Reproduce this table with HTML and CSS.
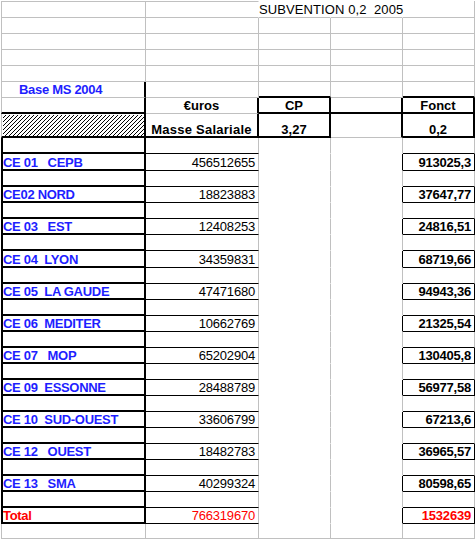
FILE: index.html
```html
<!DOCTYPE html>
<html lang="fr">
<head>
<meta charset="utf-8">
<title>Subvention 0,2 2005</title>
<link rel="stylesheet" href="styles.css">
</head>
<body>
<div class="sheet">
  <!-- row 1 -->
  <div class="c a top"></div>
  <div class="c top nr"></div>
  <div class="c nr"><span class="sub">SUBVENTION 0,2  2005</span></div>
  <div class="c nr"></div>
  <div class="c"></div>
  <!-- rows 2-5 -->
  <div class="c a"></div><div class="c"></div><div class="c"></div><div class="c"></div><div class="c"></div>
  <div class="c a"></div><div class="c"></div><div class="c"></div><div class="c"></div><div class="c"></div>
  <div class="c a"></div><div class="c"></div><div class="c"></div><div class="c"></div><div class="c"></div>
  <div class="c a"></div><div class="c"></div><div class="c"></div><div class="c"></div><div class="c"></div>
  <!-- row 6 -->
  <div class="c a tr base"><span class="lbl">Base MS 2004</span></div>
  <div class="c"></div>
  <div class="c tb"></div>
  <div class="c"></div>
  <div class="c tb"></div>
  <!-- row 7 -->
  <div class="c a tr tb"></div>
  <div class="c tr ctr"><span class="hd">€uros</span></div>
  <div class="c tr tb ctr"><span class="hd">CP</span></div>
  <div class="c tr tb"></div>
  <div class="c tr tb ctr"><span class="hd">Fonct</span></div>
  <!-- row 8 -->
  <div class="c a tr tb hatch"></div>
  <div class="c tr tb ctr"><span class="hd wide">Masse Salariale</span></div>
  <div class="c tr tb ctr"><span class="hd">3,27</span></div>
  <div class="c tr"></div>
  <div class="c tr tb ctr"><span class="hd">0,2</span></div>
  <!-- row 9 spacer -->
  <div class="c a tl tr tb"></div><div class="c kb"></div><div class="c nb"></div><div class="c nb"></div><div class="c kb"></div>
  <!-- CE 01 -->
  <div class="c a tl tr tb"><span class="lbl">CE 01   CEPB</span></div>
  <div class="c kb rgt"><span class="num">456512655</span></div>
  <div class="c nb"></div>
  <div class="c nb kr"></div>
  <div class="c kb kr rgt"><span class="bn">913025,3</span></div>
  <div class="c a tl tr tb"></div><div class="c kb"></div><div class="c nb"></div><div class="c nb"></div><div class="c kb"></div>
  <!-- CE02 -->
  <div class="c a tl tr tb"><span class="lbl">CE02 NORD</span></div>
  <div class="c kb rgt"><span class="num">18823883</span></div>
  <div class="c nb"></div>
  <div class="c nb kr"></div>
  <div class="c kb kr rgt"><span class="bn">37647,77</span></div>
  <div class="c a tl tr tb"></div><div class="c kb"></div><div class="c nb"></div><div class="c nb"></div><div class="c kb"></div>
  <!-- CE 03 -->
  <div class="c a tl tr tb"><span class="lbl">CE 03   EST</span></div>
  <div class="c kb rgt"><span class="num">12408253</span></div>
  <div class="c nb"></div>
  <div class="c nb kr"></div>
  <div class="c kb kr rgt"><span class="bn">24816,51</span></div>
  <div class="c a tl tr tb"></div><div class="c kb"></div><div class="c nb"></div><div class="c nb"></div><div class="c kb"></div>
  <!-- CE 04 -->
  <div class="c a tl tr tb"><span class="lbl">CE 04  LYON</span></div>
  <div class="c kb rgt"><span class="num">34359831</span></div>
  <div class="c nb"></div>
  <div class="c nb kr"></div>
  <div class="c kb kr rgt"><span class="bn">68719,66</span></div>
  <div class="c a tl tr tb"></div><div class="c kb"></div><div class="c nb"></div><div class="c nb"></div><div class="c kb"></div>
  <!-- CE 05 -->
  <div class="c a tl tr tb"><span class="lbl">CE 05  LA GAUDE</span></div>
  <div class="c kb rgt"><span class="num">47471680</span></div>
  <div class="c nb"></div>
  <div class="c nb kr"></div>
  <div class="c kb kr rgt"><span class="bn">94943,36</span></div>
  <div class="c a tl tr tb"></div><div class="c kb"></div><div class="c nb"></div><div class="c nb"></div><div class="c kb"></div>
  <!-- CE 06 -->
  <div class="c a tl tr tb"><span class="lbl">CE 06  MEDITER</span></div>
  <div class="c kb rgt"><span class="num">10662769</span></div>
  <div class="c nb"></div>
  <div class="c nb kr"></div>
  <div class="c kb kr rgt"><span class="bn">21325,54</span></div>
  <div class="c a tl tr tb"></div><div class="c kb"></div><div class="c nb"></div><div class="c nb"></div><div class="c kb"></div>
  <!-- CE 07 -->
  <div class="c a tl tr tb"><span class="lbl">CE 07   MOP</span></div>
  <div class="c kb rgt"><span class="num">65202904</span></div>
  <div class="c nb"></div>
  <div class="c nb kr"></div>
  <div class="c kb kr rgt"><span class="bn">130405,8</span></div>
  <div class="c a tl tr tb"></div><div class="c kb"></div><div class="c nb"></div><div class="c nb"></div><div class="c kb"></div>
  <!-- CE 09 -->
  <div class="c a tl tr tb"><span class="lbl">CE 09  ESSONNE</span></div>
  <div class="c kb rgt"><span class="num">28488789</span></div>
  <div class="c nb"></div>
  <div class="c nb kr"></div>
  <div class="c kb kr rgt"><span class="bn">56977,58</span></div>
  <div class="c a tl tr tb"></div><div class="c kb"></div><div class="c nb"></div><div class="c nb"></div><div class="c kb"></div>
  <!-- CE 10 -->
  <div class="c a tl tr tb"><span class="lbl">CE 10  SUD-OUEST</span></div>
  <div class="c kb rgt"><span class="num">33606799</span></div>
  <div class="c nb"></div>
  <div class="c nb kr"></div>
  <div class="c kb kr rgt"><span class="bn">67213,6</span></div>
  <div class="c a tl tr tb"></div><div class="c kb"></div><div class="c nb"></div><div class="c nb"></div><div class="c kb"></div>
  <!-- CE 12 -->
  <div class="c a tl tr tb"><span class="lbl">CE 12   OUEST</span></div>
  <div class="c kb rgt"><span class="num">18482783</span></div>
  <div class="c nb"></div>
  <div class="c nb kr"></div>
  <div class="c kb kr rgt"><span class="bn">36965,57</span></div>
  <div class="c a tl tr tb"></div><div class="c kb"></div><div class="c nb"></div><div class="c nb"></div><div class="c kb"></div>
  <!-- CE 13 -->
  <div class="c a tl tr tb"><span class="lbl">CE 13   SMA</span></div>
  <div class="c kb rgt"><span class="num">40299324</span></div>
  <div class="c nb"></div>
  <div class="c nb kr"></div>
  <div class="c kb kr rgt"><span class="bn">80598,65</span></div>
  <div class="c a tl tr tb"></div><div class="c kb"></div><div class="c nb"></div><div class="c nb"></div><div class="c kb"></div>
  <!-- Total -->
  <div class="c a tl tr tb"><span class="lbl red">Total</span></div>
  <div class="c kb rgt"><span class="num red">766319670</span></div>
  <div class="c nb"></div>
  <div class="c nb kr"></div>
  <div class="c kb kr rgt"><span class="bn red">1532639</span></div>
  <!-- last row -->
  <div class="c a"></div><div class="c"></div><div class="c"></div><div class="c"></div><div class="c"></div>
</div>
</body>
</html>
```

FILE: styles.css
```css
html, body {
  margin: 0;
  background: #fff;
}

body {
  font-family: "Liberation Sans", Arial, sans-serif;
  font-size: 13px;
  color: #000;
}

.sheet {
  display: grid;
  grid-template-columns: 145px 113px 72px 72px 72px;
  grid-template-rows: 17px repeat(6, 16px) 24px 16px 17px repeat(5, 16px) 17px repeat(16, 16px) 15px;
  padding: 1px 0 0 1px;
  width: 475px;
  box-sizing: border-box;
}

.c {
  box-sizing: border-box;
  border-right: 1px solid #c0c0c0;
  border-bottom: 1px solid #c0c0c0;
  display: flex;
  align-items: flex-end;
  line-height: 15px;
  white-space: pre;
  min-width: 0;
}

.a { border-left: 1px solid #c0c0c0; }
.top { border-top: 1px solid #c0c0c0; }

/* thick black borders */
.tb { border-bottom: 2px solid #000; line-height: 13px; }
.tr { border-right: 2px solid #000; }
.tl { border-left: 2px solid #000; }

/* thin black borders */
.kb { border-bottom-color: #000; }
.kr { border-right-color: #000; }

/* hidden grid lines */
.nb { border-bottom-color: transparent; }
.nr { border-right-color: transparent; }

.ctr { justify-content: center; }
.rgt { justify-content: flex-end; padding-right: 3px; }
.base { padding-left: 17px; }

.sub { letter-spacing: 0.1px; }
.hd { font-weight: bold; }
.wide { letter-spacing: 0.25px; }

.lbl {
  color: #1e1eff;
  font-weight: bold;
  letter-spacing: -0.3px;
}

.num { letter-spacing: -0.2px; }

.bn {
  font-weight: bold;
  letter-spacing: -0.2px;
}

.red { color: #ff0000; }

.hatch {
  padding: 1px 0 0 1px;
  background: repeating-linear-gradient(135deg, #000 0 0.75px, #fff 0.75px 2.83px);
  background-clip: content-box;
}
```
